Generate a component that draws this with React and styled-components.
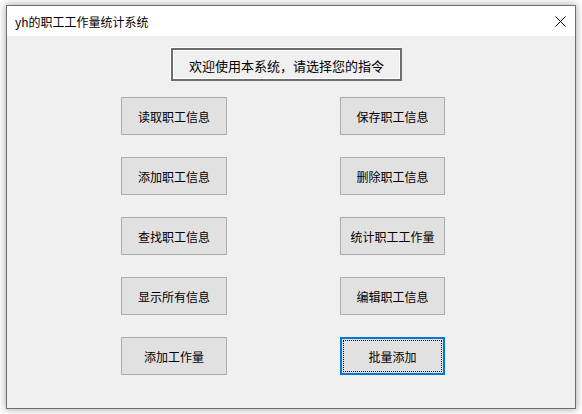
import React from "react";
import styled, { createGlobalStyle } from "styled-components";

const Global = createGlobalStyle`
  html, body { margin: 0; padding: 0; }
  body {
    width: 582px; height: 414px; overflow: hidden;
    background: #ffffff;
    font-family: "Noto Sans CJK SC", "Noto Sans", sans-serif;
  }
`;

const Page = styled.div`
  width: 582px;
  height: 414px;
  padding: 5px 0 0 6px;
  box-sizing: border-box;
`;

const Window = styled.div`
  width: 570px;
  height: 404px;
  box-sizing: border-box;
  border: 1px solid #6f6f6f;
  background: #f0f0f0;
  box-shadow: 0 0 7px 1px rgba(0, 0, 0, 0.3);
  display: flex;
  flex-direction: column;
`;

const TitleBar = styled.div`
  height: 30px;
  background: #ffffff;
  display: flex;
  align-items: center;
  justify-content: space-between;
  padding: 0 9px 0 8px;
  flex-shrink: 0;
`;

const Title = styled.span`
  font-size: 12px;
  color: #000;
  line-height: 30px;
  padding-top: 1px;
`;

const Close = styled.div`
  width: 12px;
  height: 12px;
  display: flex;
  align-items: center;
  justify-content: center;
`;

const Client = styled.div`
  flex: 1;
  display: flex;
  flex-direction: column;
  padding-top: 12px;
`;

const Banner = styled.div`
  margin-left: 164px;
  width: 231px;
  height: 33px;
  box-sizing: border-box;
  border: 2px solid #6d6d6d;
  box-shadow: -1px -1px 0 #ffffff, inset 1px 1px 0 #ffffff, inset -1px -1px 0 #ffffff;
  display: flex;
  align-items: center;
  justify-content: center;
  font-size: 13px;
  color: #000;
  padding-top: 1px;
`;

const Grid = styled.div`
  margin-top: 16px;
  margin-left: 114px;
  display: grid;
  grid-template-columns: 106px 105px;
  grid-auto-rows: 38px;
  column-gap: 113px;
  row-gap: 22px;
`;

const Button = styled.button`
  position: relative;
  box-sizing: border-box;
  margin: 0;
  padding: 0;
  background: #e1e1e1;
  border: ${(p) => (p.$focused ? "2px solid #0078d7" : "1px solid #adadad")};
  font-family: "Noto Sans CJK SC", "Noto Sans", sans-serif;
  font-size: 12px;
  color: #000;
  display: flex;
  align-items: center;
  justify-content: center;
  &::after {
    content: "";
    display: ${(p) => (p.$focused ? "block" : "none")};
    position: absolute;
    inset: 1px;
    border: 1px dotted #000;
  }
`;

const left = ["读取职工信息", "添加职工信息", "查找职工信息", "显示所有信息", "添加工作量"];
const right = ["保存职工信息", "删除职工信息", "统计职工工作量", "编辑职工信息", "批量添加"];

export default function App() {
  const cells = [];
  left.forEach((l, i) => {
    cells.push(<Button key={"l" + i}>{l}</Button>);
    cells.push(
      <Button key={"r" + i} $focused={i === 4}>
        {right[i]}
      </Button>
    );
  });
  return (
    <>
      <Global />
      <Page>
        <Window>
          <TitleBar>
            <Title>yh的职工工作量统计系统</Title>
            <Close>
              <svg width="11" height="11" viewBox="0 0 11 11">
                <path d="M0.5 0.5 L10.5 10.5 M10.5 0.5 L0.5 10.5" stroke="#000" strokeWidth="1" fill="none" />
              </svg>
            </Close>
          </TitleBar>
          <Client>
            <Banner>欢迎使用本系统，请选择您的指令</Banner>
            <Grid>{cells}</Grid>
          </Client>
        </Window>
      </Page>
    </>
  );
}
